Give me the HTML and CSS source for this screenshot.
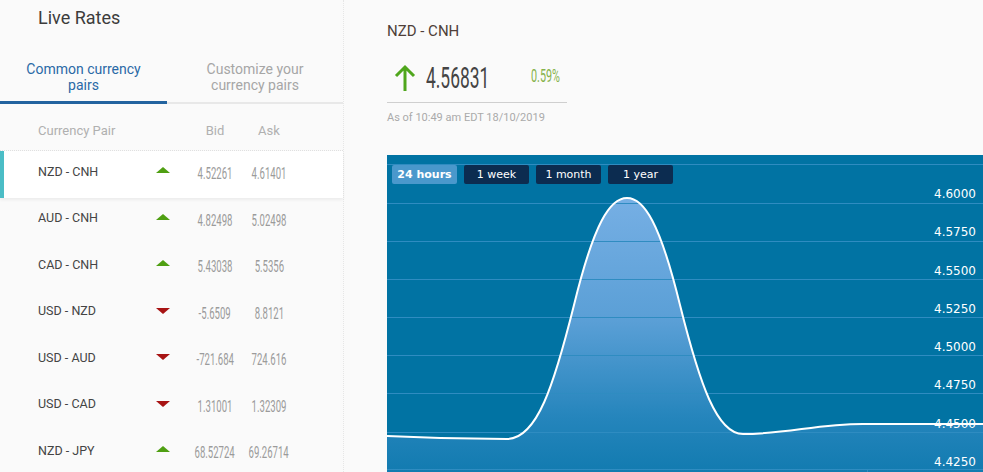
FILE: index.html
```html
<!DOCTYPE html>
<html lang="en">

<head>
    <meta charset="UTF-8">
    <meta name="viewport" content="width=device-width, initial-scale=1.0">
    <title>Live Rates</title>
    <link rel="stylesheet" href="styles.css">
</head>

<body>
    <div class="page">
        <aside class="rates">
            <h2 class="rates_title">Live Rates</h2>
            <div class="tabs">
                <div class="tab active">Common currency<br>pairs</div>
                <div class="tab">Customize your<br>currency pairs</div>
            </div>
            <div class="table_head">
                <span class="col_pair">Currency Pair</span>
                <span class="col_trend"></span>
                <span class="col_num">Bid</span>
                <span class="col_num">Ask</span>
            </div>
            <ul class="pair_list">
                <li class="pair selected">
                    <span class="col_pair">NZD - CNH</span>
                    <span class="col_trend"><i class="up"></i></span>
                    <span class="col_num"><b class="num">4.52261</b></span>
                    <span class="col_num"><b class="num">4.61401</b></span>
                </li>
                <li class="pair">
                    <span class="col_pair">AUD - CNH</span>
                    <span class="col_trend"><i class="up"></i></span>
                    <span class="col_num"><b class="num">4.82498</b></span>
                    <span class="col_num"><b class="num">5.02498</b></span>
                </li>
                <li class="pair">
                    <span class="col_pair">CAD - CNH</span>
                    <span class="col_trend"><i class="up"></i></span>
                    <span class="col_num"><b class="num">5.43038</b></span>
                    <span class="col_num"><b class="num">5.5356</b></span>
                </li>
                <li class="pair">
                    <span class="col_pair">USD - NZD</span>
                    <span class="col_trend"><i class="down"></i></span>
                    <span class="col_num"><b class="num">-5.6509</b></span>
                    <span class="col_num"><b class="num">8.8121</b></span>
                </li>
                <li class="pair">
                    <span class="col_pair">USD - AUD</span>
                    <span class="col_trend"><i class="down"></i></span>
                    <span class="col_num"><b class="num">-721.684</b></span>
                    <span class="col_num"><b class="num">724.616</b></span>
                </li>
                <li class="pair">
                    <span class="col_pair">USD - CAD</span>
                    <span class="col_trend"><i class="down"></i></span>
                    <span class="col_num"><b class="num">1.31001</b></span>
                    <span class="col_num"><b class="num">1.32309</b></span>
                </li>
                <li class="pair">
                    <span class="col_pair">NZD - JPY</span>
                    <span class="col_trend"><i class="up"></i></span>
                    <span class="col_num"><b class="num">68.52724</b></span>
                    <span class="col_num"><b class="num">69.26714</b></span>
                </li>
            </ul>
        </aside>

        <main class="detail">
            <h3 class="detail_title">NZD - CNH</h3>
            <div class="quote">
                <svg class="quote_arrow" width="22" height="27" viewBox="0 0 22 27">
                    <path d="M11 27V3M2 12L11 3L20 12" fill="none" stroke="#4fa61c" stroke-width="3" />
                </svg>
                <span class="quote_price">4.56831</span>
                <span class="quote_change">0.59%</span>
            </div>
            <p class="quote_time">As of 10:49 am EDT 18/10/2019</p>

            <div class="chart">
                <div class="ranges">
                    <button class="range current">24 hours</button>
                    <button class="range">1 week</button>
                    <button class="range">1 month</button>
                    <button class="range">1 year</button>
                </div>
                <svg class="chart_svg" width="596" height="317" viewBox="0 0 596 317">
                    <defs>
                        <linearGradient id="areaFill" x1="0" y1="43" x2="0" y2="317" gradientUnits="userSpaceOnUse">
                            <stop offset="0" stop-color="#76afe4" />
                            <stop offset="0.45" stop-color="#5a9fd6" />
                            <stop offset="0.8" stop-color="#2585bc" />
                            <stop offset="1" stop-color="#127bb0" />
                        </linearGradient>
                    </defs>
                    <rect width="596" height="317" fill="#0173a3" />
                    <path d="M0 281C40 283 100 284 120 284C150 284 167 230 187 150C207 68 223 43 240 43C257 43 273 68 293 150C313 230 330 279 356 279C400 279 430 269 476 269L596 269L596 317L0 317Z" fill="url(#areaFill)" />
                    <g stroke="#2f8cc1" stroke-width="1">
                        <line x1="0" y1="9.5" x2="596" y2="9.5" />
                        <line x1="0" y1="48.5" x2="596" y2="48.5" />
                        <line x1="0" y1="86.5" x2="596" y2="86.5" />
                        <line x1="0" y1="124.5" x2="596" y2="124.5" />
                        <line x1="0" y1="162.5" x2="596" y2="162.5" />
                        <line x1="0" y1="200.5" x2="596" y2="200.5" />
                        <line x1="0" y1="238.5" x2="596" y2="238.5" />
                        <line x1="0" y1="277.5" x2="596" y2="277.5" />
                        <line x1="0" y1="314.5" x2="596" y2="314.5" />
                        <line x1="480.5" y1="314" x2="480.5" y2="317" />
                    </g>
                    <path d="M0 281C40 283 100 284 120 284C150 284 167 230 187 150C207 68 223 43 240 43C257 43 273 68 293 150C313 230 330 279 356 279C400 279 430 269 476 269L596 269" fill="none" stroke="#ffffff" stroke-width="2" />
                    <g class="axis_labels">
                        <text x="589" y="43">4.6000</text>
                        <text x="589" y="81">4.5750</text>
                        <text x="589" y="120">4.5500</text>
                        <text x="589" y="158">4.5250</text>
                        <text x="589" y="196">4.5000</text>
                        <text x="589" y="234">4.4750</text>
                        <text x="589" y="273">4.4500</text>
                        <text x="589" y="311">4.4250</text>
                    </g>
                </svg>
            </div>
        </main>
    </div>
</body>

</html>
```

FILE: styles.css
```css
body {
    margin: 0;
    background: #fafafa;
    font-family: Roboto, "Liberation Sans", sans-serif;
    overflow: hidden;
}

.page {
    display: flex;
    height: 472px;
}

/* left column */
.rates {
    width: 343px;
    flex-shrink: 0;
    border-right: 1px dotted #e6e6e6;
}

.rates_title {
    margin: 0;
    padding: 7px 0 0 38px;
    font-size: 18px;
    line-height: 22px;
    font-weight: 400;
    color: #3c3c3c;
}

.tabs {
    display: flex;
    margin-top: 32px;
}

.tab {
    text-align: center;
    font-size: 14px;
    line-height: 16px;
    color: #a6a6a6;
    padding-bottom: 9px;
    border-bottom: 2px solid #e8e8e8;
}

.tab:first-child {
    width: 167px;
}

.tab:last-child {
    flex: 1;
}

.tab.active {
    color: #2a69a6;
    padding-bottom: 8px;
    border-bottom: 3px solid #23639f;
}

.table_head,
.pair {
    display: flex;
    align-items: center;
    padding-left: 38px;
}

.table_head {
    padding-top: 19px;
    padding-bottom: 11px;
    line-height: 16px;
    font-size: 13px;
    color: #b0b0b0;
    border-bottom: 1px dotted #e0e0e0;
}

.col_pair {
    width: 100px;
}

.col_trend {
    width: 50px;
    display: flex;
    justify-content: center;
}

.col_num {
    width: 54px;
    display: flex;
    justify-content: center;
}

.pair_list {
    list-style: none;
    margin: 0;
    padding: 0;
}

.pair {
    height: 46.5px;
    box-sizing: border-box;
    padding-bottom: 6px;
    font-size: 12.5px;
    color: #444;
}

.pair.selected {
    background: #fff;
    border-left: 4px solid #4bbdc6;
    padding-left: 34px;
    box-shadow: 0 2px 3px rgba(0, 0, 0, 0.06);
}

.num {
    display: inline-block;
    font-weight: 400;
    font-size: 16.5px;
    color: #9b9b9b;
    transform: scaleX(0.58);
    margin-top: 5px;
    white-space: nowrap;
}

.up,
.down {
    display: block;
    width: 0;
    height: 0;
    border-left: 7px solid transparent;
    border-right: 7px solid transparent;
}

.up {
    border-bottom: 6px solid #4f9f12;
    margin-top: -2px;
}

.down {
    border-top: 6px solid #a71313;
}

/* right column */
.detail {
    flex: 1;
    padding: 23px 0 0 43px;
}

.detail_title {
    margin: 0;
    font-size: 15px;
    line-height: 16px;
    font-weight: 400;
    color: #4f3f39;
}

.quote {
    display: flex;
    align-items: center;
    width: 180px;
    height: 40px;
    margin-top: 18px;
    padding-bottom: 5px;
    border-bottom: 1px solid #cfcfcf;
}

.quote_arrow {
    flex-shrink: 0;
    margin-left: 7px;
    margin-top: 1px;
}

.quote_price {
    flex-shrink: 0;
    display: inline-block;
    width: 105px;
    margin-left: 10px;
    font-size: 30px;
    color: #444;
    transform: scaleX(0.58);
    transform-origin: left center;
    margin-top: 1px;
    white-space: nowrap;
}

.quote_change {
    flex-shrink: 0;
    display: inline-block;
    width: 30px;
    margin-top: -3px;
    font-size: 18px;
    color: #86b24a;
    transform: scaleX(0.6);
    transform-origin: left center;
    white-space: nowrap;
}

.quote_time {
    margin: 8px 0 0;
    font-size: 11px;
    line-height: 14px;
    color: #aaa;
}

.chart {
    position: relative;
    margin-top: 30px;
    width: 596px;
    height: 317px;
}

.chart_svg {
    display: block;
}

.ranges {
    position: absolute;
    top: 10px;
    left: 5px;
    display: flex;
    gap: 7px;
}

.range {
    width: 65px;
    height: 19px;
    padding: 0;
    border: none;
    border-radius: 2px;
    background: #0c2c50;
    color: #fff;
    font-family: "DejaVu Sans", Verdana, sans-serif;
    font-size: 11px;
}

.range.current {
    background: #4a98cc;
    font-weight: 700;
}

.axis_labels text {
    fill: #fff;
    font-family: "DejaVu Sans", Verdana, sans-serif;
    font-size: 12px;
    text-anchor: end;
}
```
